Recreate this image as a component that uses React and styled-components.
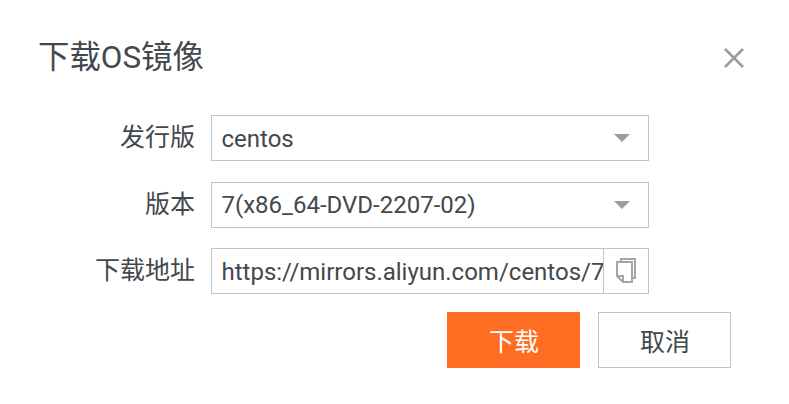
import React from "react";
import styled, { createGlobalStyle } from "styled-components";

const GlobalStyle = createGlobalStyle`
  html, body {
    margin: 0;
    padding: 0;
    background: #fff;
  }
  * {
    box-sizing: border-box;
  }
`;

const Dialog = styled.div`
  width: 789px;
  height: 404px;
  padding: 37px 38px 0;
  background: #fff;
  color: #43484d;
  font-family: Roboto, "Noto Sans CJK SC", sans-serif;
`;

const Header = styled.div`
  display: flex;
  justify-content: space-between;
  align-items: center;
  height: 42px;
  margin-bottom: 36px;
`;

const Title = styled.h2`
  margin: 0;
  font-size: 31.4px;
  font-weight: 400;
  line-height: 42px;
`;

const CloseButton = styled.button`
  display: flex;
  width: 22px;
  height: 22px;
  margin-right: 6px;
  padding: 0;
  border: none;
  background: none;
  cursor: pointer;
`;

const Form = styled.div`
  display: flex;
  flex-direction: column;
  gap: 20.5px;
`;

const Row = styled.div`
  display: flex;
  align-items: center;
  gap: 16px;
`;

const Label = styled.label`
  width: 157px;
  font-size: 25px;
  line-height: 46px;
  text-align: right;
`;

const Field = styled.div`
  display: flex;
  align-items: center;
  width: 438px;
  height: 46px;
  border: 1px solid #c4c4c4;
  font-size: 24px;
  background: #fff;
`;

const Value = styled.span`
  flex: 1;
  min-width: 0;
  padding: 1px 0 0 9.5px;
  overflow: hidden;
  white-space: nowrap;
`;

const Caret = styled.span`
  width: 0;
  height: 0;
  margin-right: 18px;
  border-style: solid;
  border-width: 8px 8px 0;
  border-color: #999da1 transparent transparent;
`;

const CopyButton = styled.button`
  display: flex;
  align-items: center;
  justify-content: center;
  flex: none;
  width: 45px;
  height: 100%;
  padding: 0 1px 1px 0;
  border: none;
  border-left: 1px solid #c4c4c4;
  background: #fff;
`;

const Actions = styled.div`
  display: flex;
  justify-content: flex-end;
  gap: 18px;
  width: 693px;
  margin-top: 18px;
`;

const ActionButton = styled.button`
  width: 133px;
  height: 56px;
  padding: 0 0 0 1px;
  border: 1px solid ${(p) => (p.$primary ? "#ff6d22" : "#c4c4c4")};
  background: ${(p) => (p.$primary ? "#ff6d22" : "#fff")};
  color: ${(p) => (p.$primary ? "#fff" : "#43484d")};
  font-family: inherit;
  font-size: 25px;
  cursor: pointer;
`;

const fields = [
  { label: "发行版", value: "centos" },
  { label: "版本", value: "7(x86_64-DVD-2207-02)" },
];

function CopyIcon() {
  return (
    <svg width="20" height="25" viewBox="0 0 20 25" fill="none" stroke="#a3a7aa" strokeWidth="2">
      <path d="M5 4V1h14v19h-3" />
      <path d="M1 4h15v20H7l-6-6z" />
      <path d="M1 18h6v6" />
    </svg>
  );
}

export default function App() {
  return (
    <>
      <GlobalStyle />
      <Dialog>
        <Header>
          <Title>下载OS镜像</Title>
          <CloseButton aria-label="close">
            <svg width="22" height="22" viewBox="0 0 22 22" stroke="#999da1" strokeWidth="2.6">
              <path d="M2 2l18 18M20 2L2 20" />
            </svg>
          </CloseButton>
        </Header>
        <Form>
          {fields.map((f) => (
            <Row key={f.label}>
              <Label>{f.label}</Label>
              <Field>
                <Value>{f.value}</Value>
                <Caret />
              </Field>
            </Row>
          ))}
          <Row>
            <Label>下载地址</Label>
            <Field>
              <Value>https://mirrors.aliyun.com/centos/7/isos/x86_64/</Value>
              <CopyButton aria-label="copy">
                <CopyIcon />
              </CopyButton>
            </Field>
          </Row>
        </Form>
        <Actions>
          <ActionButton $primary>下载</ActionButton>
          <ActionButton>取消</ActionButton>
        </Actions>
      </Dialog>
    </>
  );
}
